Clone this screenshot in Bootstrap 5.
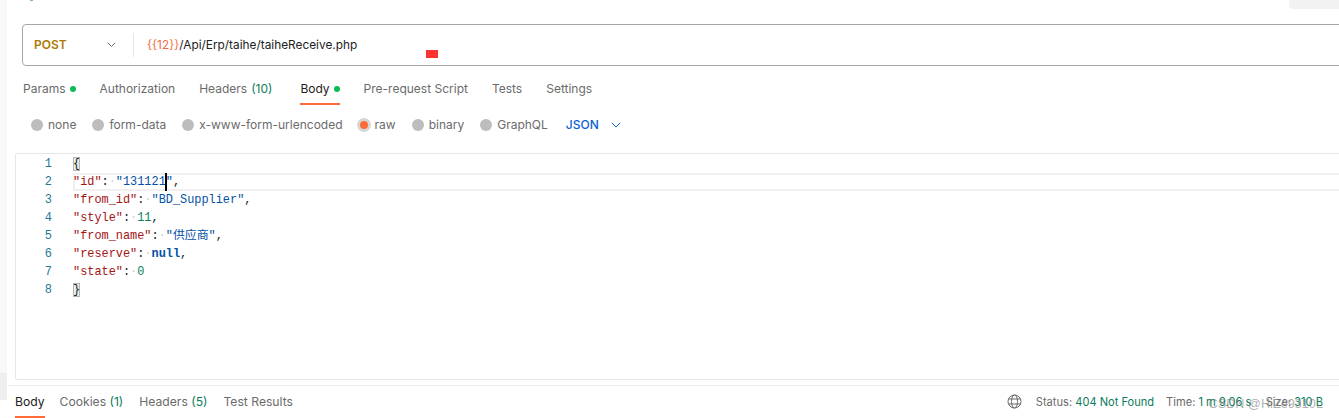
<!DOCTYPE html>
<html lang="en"><head><meta charset="utf-8"><title>Request</title>
<link href="https://cdn.jsdelivr.net/npm/bootstrap@5.3.0/dist/css/bootstrap.min.css" rel="stylesheet">
<style>
html,body{height:418px;overflow:hidden;background:#fff}
body{font-family:Inter,"Noto Sans",sans-serif;font-size:12px;color:#6b6b6b}
.shell{height:418px;position:relative}
.rail{width:7px;background:#f8f8f8;height:400px}
.railstep{margin-top:373px;height:27px;background:#eee}
.topchip{position:absolute;right:0;top:0;width:50px;height:9px;background:#f2f2f2;border-bottom-left-radius:4px}
.topmark{position:absolute;left:30px;top:0;width:3px;height:1px;background:#7fb6c4}
.urlbar{height:42px;margin:24px -20px 0 15px;border:1px solid #a6a6a6;border-radius:4px;padding-left:11px}
.chev{margin-right:17px}
.method{width:99px;color:#ad7a03;font-weight:600}
.divider{width:1px;height:24px;background:#e6e6e6;margin-right:13px}
.url{color:#212121;font-size:11.85px;padding-top:1px}
.varname{color:#f26b3a}
.redmark{position:absolute;left:426px;top:50px;width:12px;height:8px;background:#f33}
.reqtabs{height:39px;margin-left:16px;gap:24px}
.tabitem{height:39px;padding-top:6px;position:relative;display:flex;align-items:center;gap:4px}
.tabitem.now{color:#212121;margin-left:4px}
.tabitem.now::after{content:"";position:absolute;left:0;right:0;bottom:0;height:2px;background:#ff6c37}
.count{color:#0c7c5c}
.dotgreen{width:6px;height:6px;border-radius:50%;background:#0cbb52}
.bodyopts{height:40px;margin:0 0 8px 24px}
.opt{display:flex;align-items:center;gap:5px;margin-right:16px}
.radio{width:12px;height:12px;border-radius:50%;background:#bdbdbd}
.radio.on{width:14px;height:14px;margin-left:-2px;margin-right:-1px;background:#ff6c37;border:3px solid #d6d6d6}
.jsonpick{color:#0a5fd1;font-weight:500;gap:12px;margin-left:2px}
.editor{height:227px;margin:0 -20px 0 8px;border:1px solid #e6e6e6;border-radius:2px;font-family:"Liberation Mono","Noto Sans CJK SC",monospace;font-size:11.9px;line-height:18px;padding-top:1px}
.cl{height:18px;display:flex;position:relative}
.ln{width:36px;text-align:right;color:#237893;flex:none}
.code{margin-left:21px;white-space:pre;color:#212121;flex:1}
.active .code{box-shadow:inset 0 0 0 2px #f0f0f0}
.k{color:#a31515}.s{color:#0451a5}.n{color:#098658}.b{color:#0451a5;font-weight:700}
.ws{color:#cfcfcf}
.brace{background:#e8efe8;outline:1px solid #b5b5b5;outline-offset:-1px}
.caret{display:inline-block;width:2px;height:18px;background:#000;vertical-align:top;margin:0 -1px}
.footbar{position:absolute;left:8px;right:0;top:385px;height:33px;border-top:1px solid #ececec;padding-left:7px;font-size:12.15px}
.restabs{gap:16px}
.restab{height:32px;display:flex;align-items:center;position:relative}
.restab.now{color:#212121;margin-right:-1px}
.restab.now::after{content:"";position:absolute;left:0;right:0;bottom:0;height:2px;background:#ff6c37}
.ok{color:#0c7c5c}
.stat{gap:12px;font-size:11.1px;margin-right:16px}
.stlabel{margin-left:2px}
.szpart{margin-left:5px}
.wm{position:absolute;right:16px;top:395px;color:rgba(120,120,120,.6);font-size:12.7px;font-family:"Liberation Sans",sans-serif}
</style></head><body>
<div class="shell d-flex">
<div class="rail flex-shrink-0"><div class="railstep"></div></div>
<div class="flex-grow-1">
<div class="urlbar d-flex align-items-center">
<div class="method d-flex align-items-center"><span class="flex-grow-1">POST</span><svg width="9" height="6" viewBox="0 0 9 6" class="chev" fill="none" stroke="#6b6b6b"><path d="M.8.8l3.700 3.700L8.200.8"/></svg></div>
<div class="divider"></div>
<div class="url"><span class="varname">{{12}}</span>/Api/Erp/taihe/taiheReceive.php</div>
</div>
<div class="reqtabs d-flex">
<div class="tabitem">Params<span class="dotgreen"></span></div>
<div class="tabitem">Authorization</div>
<div class="tabitem">Headers <span class="count">(10)</span></div>
<div class="tabitem now">Body<span class="dotgreen"></span></div>
<div class="tabitem">Pre-request Script</div>
<div class="tabitem">Tests</div>
<div class="tabitem">Settings</div>
</div>
<div class="bodyopts d-flex align-items-center">
<div class="opt"><span class="radio"></span>none</div>
<div class="opt"><span class="radio"></span>form-data</div>
<div class="opt"><span class="radio"></span>x-www-form-urlencoded</div>
<div class="opt"><span class="radio on"></span>raw</div>
<div class="opt"><span class="radio"></span>binary</div>
<div class="opt"><span class="radio"></span>GraphQL</div>
<div class="jsonpick d-flex align-items-center">JSON<svg width="10" height="6" viewBox="0 0 10 6" fill="none" stroke="#0a5fd1"><path d="M.8.8L5 5 9.200.8"/></svg></div>
</div>
<div class="editor">
<div class="cl"><span class="ln">1</span><span class="code"><span class="brace">{</span></span></div>
<div class="cl active"><span class="ln">2</span><span class="code"><span class="k">"id"</span>:<span class="ws">·</span><span class="s">"131121<i class="caret"></i>"</span>,</span></div>
<div class="cl"><span class="ln">3</span><span class="code"><span class="k">"from_id"</span>:<span class="ws">·</span><span class="s">"BD_Supplier"</span>,</span></div>
<div class="cl"><span class="ln">4</span><span class="code"><span class="k">"style"</span>:<span class="ws">·</span><span class="n">11</span>,</span></div>
<div class="cl"><span class="ln">5</span><span class="code"><span class="k">"from_name"</span>:<span class="ws">·</span><span class="s">"供应商"</span>,</span></div>
<div class="cl"><span class="ln">6</span><span class="code"><span class="k">"reserve"</span>:<span class="ws">·</span><span class="b">null</span>,</span></div>
<div class="cl"><span class="ln">7</span><span class="code"><span class="k">"state"</span>:<span class="ws">·</span><span class="n">0</span></span></div>
<div class="cl"><span class="ln">8</span><span class="code"><span class="brace">}</span></span></div>
</div>
</div>
<div class="footbar d-flex justify-content-between align-items-center">
<div class="restabs d-flex">
<div class="restab now">Body</div>
<div class="restab">Cookies&nbsp;<span class="count">(1)</span></div>
<div class="restab">Headers&nbsp;<span class="count">(5)</span></div>
<div class="restab">Test Results</div>
</div>
<div class="stat d-flex align-items-center">
<svg width="15" height="15" viewBox="0 0 15 15" fill="none" stroke="#6b6b6b"><circle cx="7.500" cy="7.500" r="6.500"/><ellipse cx="7.500" cy="7.500" rx="3" ry="6.500"/><path d="M1.500 5h12M1.500 10h12"/></svg>
<span class="stlabel">Status: <span class="ok">404 Not Found</span></span>
<span>Time: <span class="ok">1 m 9.06 s</span> &nbsp;&nbsp;<span class="szpart">Size: <span class="ok">310 B</span></span></span>
</div>
</div>
<div class="wm">CSDN @HiZe9310L</div>
<div class="topchip"></div><div class="topmark"></div><div class="redmark"></div>
</div>
</body></html>
